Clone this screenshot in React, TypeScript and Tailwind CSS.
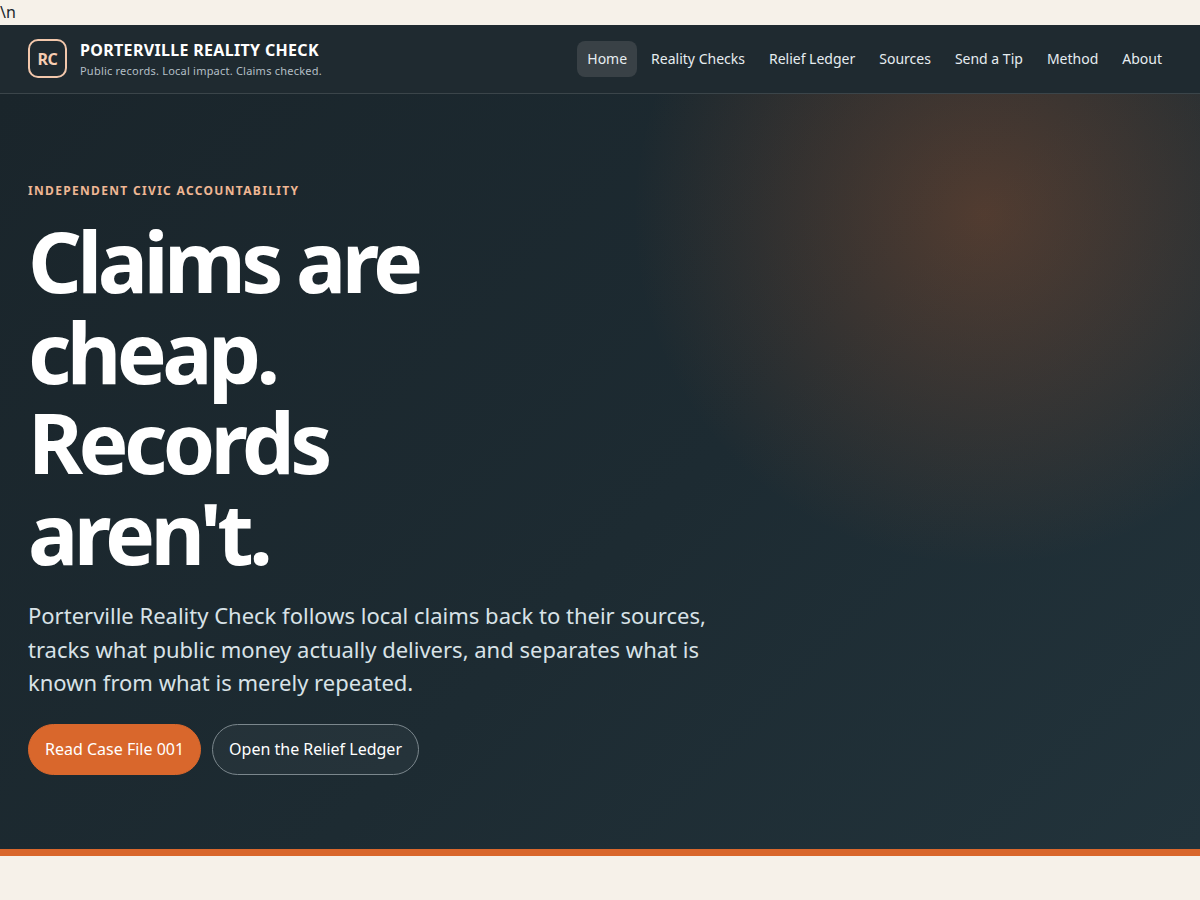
const navItems = [
	{ label: 'Home', href: '#home', active: true },
	{ label: 'Reality Checks', href: '#reality-checks' },
	{ label: 'Relief Ledger', href: '#relief-ledger' },
	{ label: 'Sources', href: '#sources' },
	{ label: 'Send a Tip', href: '#send-a-tip' },
	{ label: 'Method', href: '#method' },
	{ label: 'About', href: '#about' },
];

export default function App() {
	return (
		<div className="min-h-screen bg-[#f6f1e9] font-['Noto_Sans',sans-serif] text-base text-[#1b262c]">
			<div className="h-[25px] leading-[25px]">{'\\n'}</div>
			<Header />
			<main>
				<Hero />
			</main>
		</div>
	);
}

function Header() {
	return (
		<header className="flex flex-wrap items-center justify-between gap-x-6 border-b border-[#3b454a] bg-[#1f2a30] px-7 py-3.5">
			<a href="#home" className="flex items-start gap-[13px]">
				<span className="grid size-[39px] place-items-center rounded-[10px] border-2 border-[#f2c7ab] font-bold tracking-tight text-[#f7cdb2]">
					RC
				</span>
				<span className="flex flex-col">
					<span className="text-base leading-[23px] font-bold tracking-[0.02em] text-white uppercase">
						Porterville Reality Check
					</span>
					<span className="text-[11px] leading-[17px] tracking-[0.02em] text-[#b3bfc6]">
						Public records. Local impact. Claims checked.
					</span>
				</span>
			</a>
			<nav aria-label="Main" className="flex flex-wrap gap-1">
				{navItems.map((item) => (
					<a
						key={item.href}
						href={item.href}
						aria-current={item.active ? 'page' : undefined}
						className="rounded-lg px-2.5 py-2 text-sm leading-5 text-[#e6edf0] aria-[current=page]:bg-[#394146]"
					>
						{item.label}
					</a>
				))}
			</nav>
		</header>
	);
}

function Hero() {
	return (
		<section className="border-b-[7px] border-[#d9672c] bg-[radial-gradient(circle_at_82%_16%,rgba(217,103,44,0.28),transparent_30%),linear-gradient(135deg,#1a252b,#1d2b32_55%,#22333b)] px-7 pt-[87px] pb-[74px]">
			<p className="text-xs leading-5 font-bold tracking-[0.11em] text-[#efb794] uppercase">
				Independent civic accountability
			</p>
			<h1 className="mt-[15px] max-w-[440px] text-[84px] leading-[1.08] font-bold tracking-[-0.055em] text-white">
				Claims are cheap. Records aren't.
			</h1>
			<p className="mt-5 max-w-[700px] text-[22px] leading-[1.53] text-[#d8e2e7]">
				Porterville Reality Check follows local claims back to their sources, tracks what public money
				actually delivers, and separates what is known from what is merely repeated.
			</p>
			<div className="mt-6 flex flex-wrap gap-[11px]">
				<a
					href="#case-file-001"
					className="rounded-full border border-[#d9672c] bg-[#d9672c] px-4 py-3 leading-[25px] text-white"
				>
					Read Case File 001
				</a>
				<a
					href="#relief-ledger"
					className="rounded-full border border-[#7b878d] bg-white/4 px-4 py-3 leading-[25px] text-white"
				>
					Open the Relief Ledger
				</a>
			</div>
		</section>
	);
}
